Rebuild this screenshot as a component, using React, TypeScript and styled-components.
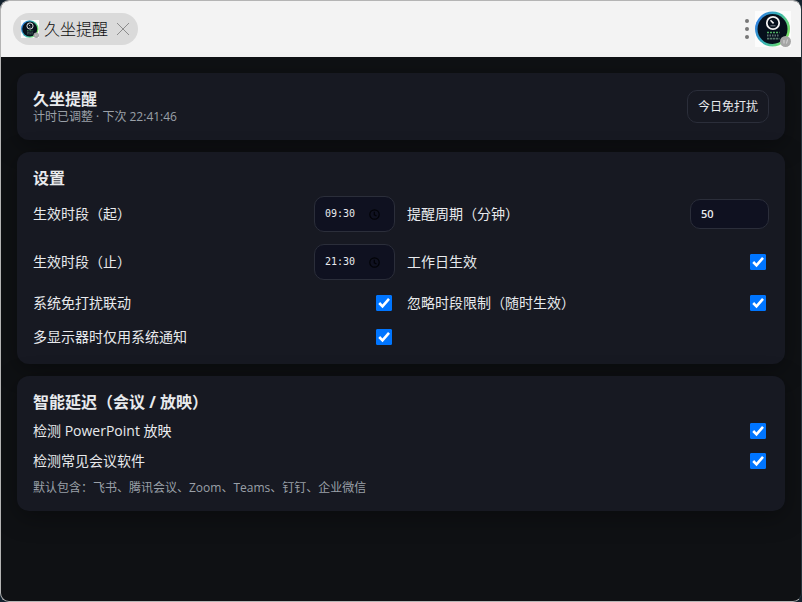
import React, { useState } from "react";
import styled, { createGlobalStyle } from "styled-components";

const GlobalStyle = createGlobalStyle`
  *, *::before, *::after { box-sizing: border-box; }
  body {
    margin: 0;
    background: #14222e;
    color: #e8eaed;
    font-family: "Open Sans", "Noto Sans CJK SC", sans-serif;
    font-size: 14px;
    line-height: 22px;
  }
  button, input { font: inherit; color: inherit; }
  h1, h2, p { margin: 0; }
`;

const Window = styled.div`
  display: flex;
  flex-direction: column;
  min-height: 100vh;
  border: 1px solid #b4b4b4;
  border-right-color: #26343c;
  border-radius: 9px;
  overflow: hidden;
  background: #0f1114;
`;

const TitleBar = styled.header`
  display: flex;
  align-items: center;
  justify-content: space-between;
  height: 56px;
  padding: 0 10px 0 12px;
  background: #f3f3f3;
`;

const AppTab = styled.div`
  display: flex;
  align-items: center;
  height: 32px;
  padding: 0 7px 0 8px;
  border-radius: 16px;
  background: #dadada;
  color: #0c0c0c;
`;

const TabName = styled.span`
  margin: 0 7px 0 5px;
  font-size: 16px;
  font-weight: 300;
`;

const PlainButton = styled.button`
  display: flex;
  padding: 0;
  border: 0;
  background: none;
  cursor: pointer;
`;

const BarActions = styled.div`
  display: flex;
  align-items: center;
  gap: 4px;
`;

const Content = styled.main`
  display: flex;
  flex-direction: column;
  gap: 12px;
  padding: 16px;
`;

const Card = styled.section`
  padding: 16px;
  border-radius: 12px;
  background: #171922;
  box-shadow: 0 6px 24px rgba(0, 0, 0, 0.35);
`;

const StatusCard = styled(Card)`
  display: flex;
  align-items: center;
  justify-content: space-between;
`;

const StackCard = styled(Card)`
  display: flex;
  flex-direction: column;
  gap: 8px;
`;

const PageTitle = styled.h1`
  font-size: 16px;
  font-weight: 700;
  line-height: 20px;
`;

const CardTitle = styled.h2`
  font-size: 16px;
  font-weight: 700;
  line-height: 20px;
`;

const Note = styled.p`
  color: #9aa0a8;
  font-size: 12px;
  line-height: 15px;
`;

const QuietButton = styled.button`
  padding: 8px 10px;
  border: 1px solid #2b2e3a;
  border-radius: 10px;
  background: #171922;
  font-size: 12px;
  line-height: 15px;
  cursor: pointer;
`;

const SettingsGrid = styled.div`
  display: grid;
  grid-template-columns: 1fr 1fr;
  gap: 12px;
`;

const Row = styled.div`
  display: flex;
  align-items: center;
  justify-content: space-between;
`;

const Field = styled.div<{ $width: number; $height: number }>`
  display: flex;
  align-items: center;
  width: ${(p) => p.$width}px;
  height: ${(p) => p.$height}px;
  padding: 0 14px 0 10px;
  border: 1px solid #2b2e3a;
  border-radius: 10px;
  background: #0f1120;
`;

const FieldInput = styled.input<{ $mono?: boolean }>`
  flex: 1;
  min-width: 0;
  padding: 0;
  border: 0;
  outline: 0;
  background: none;
  font-family: ${(p) => (p.$mono ? '"DejaVu Sans Mono", monospace' : '"Open Sans", sans-serif')};
  font-size: ${(p) => (p.$mono ? 10 : 11)}px;
  font-weight: ${(p) => (p.$mono ? 400 : 600)};
`;

const Tick = styled.input`
  appearance: none;
  width: 16px;
  height: 16px;
  margin: 0 3px;
  border: 1px solid #767676;
  border-radius: 1px;
  background: #ffffff;

  &:checked {
    border-color: #0075ff;
    background: #0075ff;
  }
`;

const TickBox = styled.span`
  display: grid;

  & > * { grid-area: 1 / 1; }
  & > svg { margin-left: 3px; pointer-events: none; }
`;

function CheckRow({ id, label }: { id: string; label: string }) {
  const [on, setOn] = useState(true);
  return (
    <Row>
      <label htmlFor={id}>{label}</label>
      <TickBox>
        <Tick id={id} type="checkbox" checked={on} onChange={(e) => setOn(e.target.checked)} />
        {on && (
          <svg width="16" height="16" viewBox="0 0 16 16" aria-hidden="true">
            <path d="M3.2 8 6.5 11.3 13 3.8" fill="none" stroke="#fff" strokeWidth="2.6" />
          </svg>
        )}
      </TickBox>
    </Row>
  );
}

function TimeRow({ id, label, value }: { id: string; label: string; value: string }) {
  return (
    <Row>
      <label htmlFor={id}>{label}</label>
      <Field $width={81} $height={36}>
        <FieldInput id={id} $mono defaultValue={value} />
        <svg width="11" height="11" viewBox="0 0 11 11" fill="none" stroke="#020307" strokeWidth="1.2" aria-hidden="true">
          <circle cx="5.5" cy="5.5" r="4.7" />
          <path d="M5.3 2.8v3l2.2 1.3" />
        </svg>
      </Field>
    </Row>
  );
}

function Badge({ size, prefix }: { size: number; prefix: string }) {
  return (
    <svg width={size} height={size} viewBox="0 0 36 36" aria-hidden="true">
      <defs>
        <linearGradient id={`${prefix}-ring`} x1="0" y1="0.2" x2="1" y2="0.7">
          <stop offset="0" stopColor="#2f79e8" />
          <stop offset="0.5" stopColor="#38b4b0" />
          <stop offset="1" stopColor="#7ee65a" />
        </linearGradient>
      </defs>
      <path d="M0 0h36v36H0z" fill="#fcfcfc" />
      <circle cx="17.5" cy="18" r="17.5" fill={`url(#${prefix}-ring)`} />
      <circle cx="17.5" cy="18" r="15" fill="#06101c" />
      <circle cx="18" cy="12" r="6.2" fill="none" stroke="#f2f2f2" strokeWidth="1.8" />
      <path d="M15.5 9.2 18.6 12.4" stroke="#f2f2f2" strokeWidth="1.6" />
      <path d="M15.5 14.8h5" stroke="#8b9299" strokeWidth="0.9" />
      <path d="M12 21.5h12.5" stroke="#4fae62" strokeWidth="1.6" strokeDasharray="2 1" />
      <path d="M12 24.5h12.5" stroke="#5d6f70" strokeWidth="2" strokeDasharray="1.5 1" />
      <path d="M12 27.7h12.5" stroke="#55796a" strokeWidth="1.8" strokeDasharray="2.4 0.6" />
      <circle cx="30.5" cy="30.5" r="5.5" fill="#a5a5a5" />
      <path d="M29 32.5v-3.5M31.5 32.5l1-4" stroke="#d6d6d6" strokeWidth="1" />
    </svg>
  );
}

export default function App() {
  return (
    <>
      <GlobalStyle />
      <Window>
        <TitleBar>
          <AppTab>
            <Badge size={18} prefix="tab" />
            <TabName>久坐提醒</TabName>
            <PlainButton aria-label="关闭">
              <svg width="16" height="16" viewBox="0 0 16 16" aria-hidden="true">
                <path d="M2 2 14 14M14 2 2 14" stroke="#8c8c8c" strokeWidth="1" />
              </svg>
            </PlainButton>
          </AppTab>
          <BarActions>
            <PlainButton aria-label="更多">
              <svg width="8" height="24" viewBox="0 0 8 24" fill="#777" aria-hidden="true">
                <circle cx="4" cy="4" r="2" />
                <circle cx="4" cy="12" r="2" />
                <circle cx="4" cy="20" r="2" />
              </svg>
            </PlainButton>
            <PlainButton aria-label="应用">
              <Badge size={36} prefix="app" />
            </PlainButton>
          </BarActions>
        </TitleBar>
        <Content>
          <StatusCard>
            <div>
              <PageTitle>久坐提醒</PageTitle>
              <Note>计时已调整 · 下次 22:41:46</Note>
            </div>
            <QuietButton>今日免打扰</QuietButton>
          </StatusCard>
          <StackCard>
            <CardTitle>设置</CardTitle>
            <SettingsGrid>
              <TimeRow id="start" label="生效时段（起）" value="09:30" />
              <Row>
                <label htmlFor="period">提醒周期（分钟）</label>
                <Field $width={79} $height={30}>
                  <FieldInput id="period" inputMode="numeric" defaultValue="50" />
                </Field>
              </Row>
              <TimeRow id="end" label="生效时段（止）" value="21:30" />
              <CheckRow id="workday" label="工作日生效" />
              <CheckRow id="dnd" label="系统免打扰联动" />
              <CheckRow id="always" label="忽略时段限制（随时生效）" />
              <CheckRow id="multi" label="多显示器时仅用系统通知" />
            </SettingsGrid>
          </StackCard>
          <StackCard>
            <CardTitle>智能延迟（会议 / 放映）</CardTitle>
            <CheckRow id="ppt" label="检测 PowerPoint 放映" />
            <CheckRow id="meeting" label="检测常见会议软件" />
            <Note>默认包含：飞书、腾讯会议、Zoom、Teams、钉钉、企业微信</Note>
          </StackCard>
        </Content>
      </Window>
    </>
  );
}
